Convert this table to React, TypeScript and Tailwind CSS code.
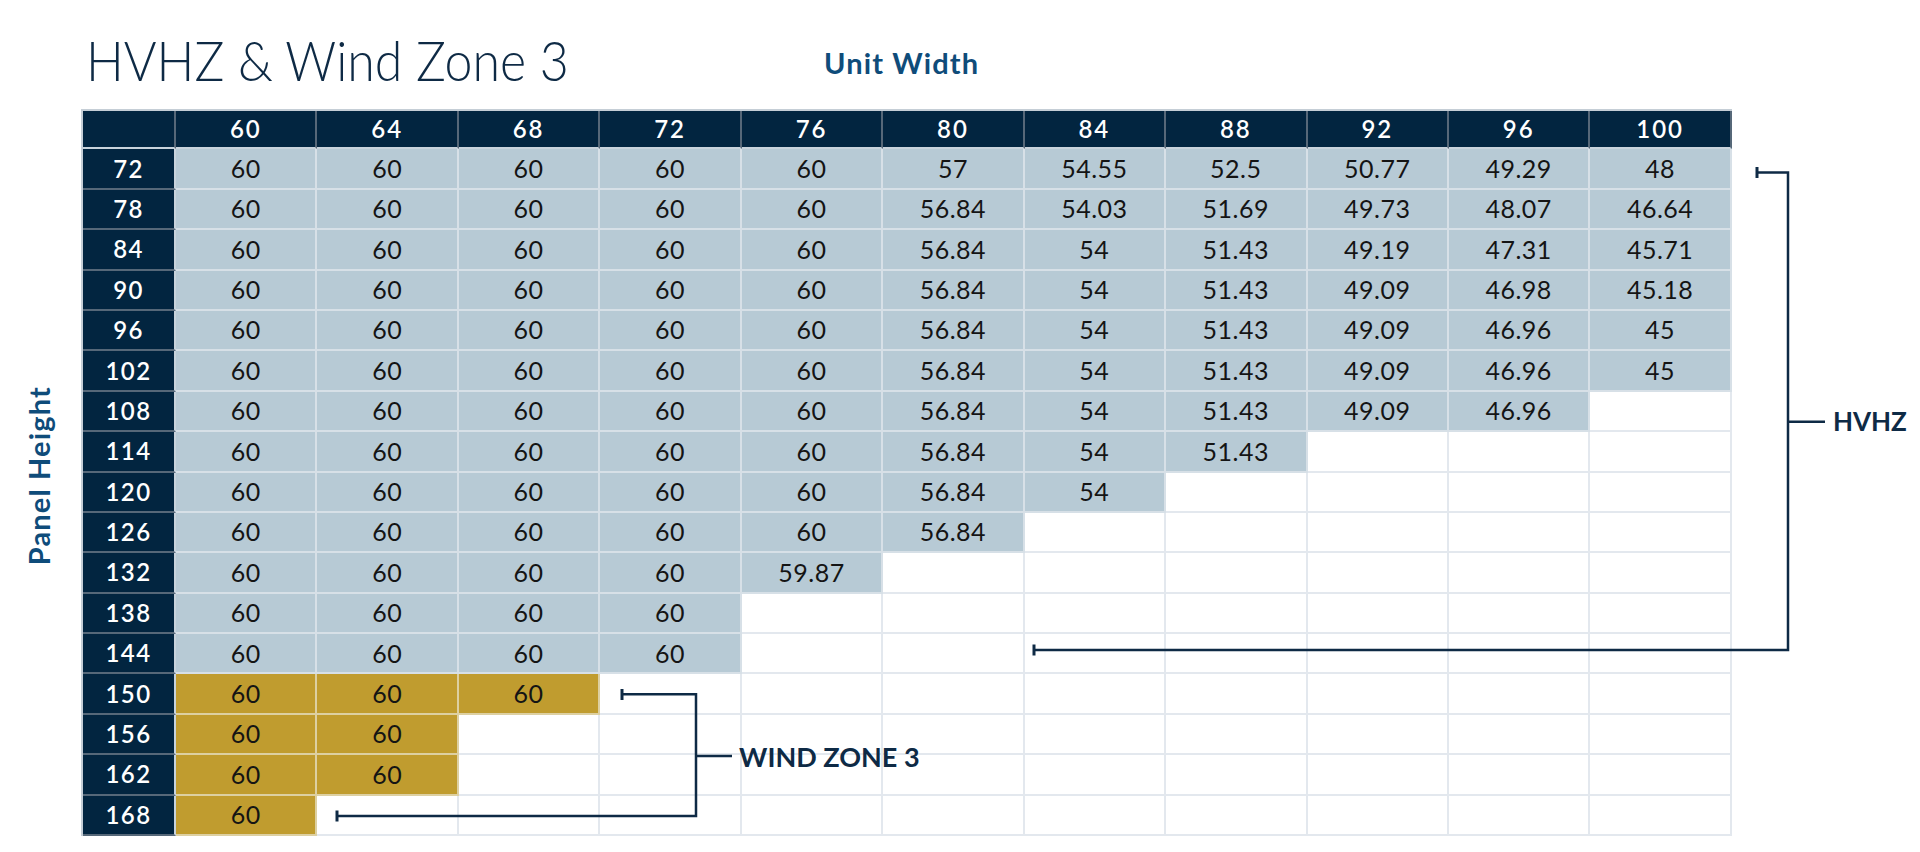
import React from "react";

const widths = [60, 64, 68, 72, 76, 80, 84, 88, 92, 96, 100];

const r60 = (n: number) => Array(n).fill("60");

const rows: { height: number; values: string[]; zone: "hvhz" | "wz" }[] = [
  { height: 72, values: [...r60(5), "57", "54.55", "52.5", "50.77", "49.29", "48"], zone: "hvhz" },
  { height: 78, values: [...r60(5), "56.84", "54.03", "51.69", "49.73", "48.07", "46.64"], zone: "hvhz" },
  { height: 84, values: [...r60(5), "56.84", "54", "51.43", "49.19", "47.31", "45.71"], zone: "hvhz" },
  { height: 90, values: [...r60(5), "56.84", "54", "51.43", "49.09", "46.98", "45.18"], zone: "hvhz" },
  { height: 96, values: [...r60(5), "56.84", "54", "51.43", "49.09", "46.96", "45"], zone: "hvhz" },
  { height: 102, values: [...r60(5), "56.84", "54", "51.43", "49.09", "46.96", "45"], zone: "hvhz" },
  { height: 108, values: [...r60(5), "56.84", "54", "51.43", "49.09", "46.96"], zone: "hvhz" },
  { height: 114, values: [...r60(5), "56.84", "54", "51.43"], zone: "hvhz" },
  { height: 120, values: [...r60(5), "56.84", "54"], zone: "hvhz" },
  { height: 126, values: [...r60(5), "56.84"], zone: "hvhz" },
  { height: 132, values: [...r60(4), "59.87"], zone: "hvhz" },
  { height: 138, values: r60(4), zone: "hvhz" },
  { height: 144, values: r60(4), zone: "hvhz" },
  { height: 150, values: r60(3), zone: "wz" },
  { height: 156, values: r60(2), zone: "wz" },
  { height: 162, values: r60(2), zone: "wz" },
  { height: 168, values: r60(1), zone: "wz" },
];

function Brackets() {
  // page y minus 109 (top of the table area)
  return (
    <svg
      className="pointer-events-none absolute left-0 top-0"
      width="1920"
      height="727"
      viewBox="0 0 1920 727"
      fill="none"
      stroke="#0e2a45"
      strokeWidth="2.5"
    >
      {/* HVHZ */}
      <path d="M1757 63.5 H1788 V541 H1034" />
      <path d="M1788 312.7 H1825" />
      <path d="M1757 58 V69" strokeWidth="3" />
      <path d="M1034 535.5 V546.5" strokeWidth="3" />
      {/* Wind Zone 3 */}
      <path d="M622 585.3 H696 V707 H337" />
      <path d="M696 647 H732" />
      <path d="M622 580 V591" strokeWidth="3" />
      <path d="M337 701.5 V712.5" strokeWidth="3" />
    </svg>
  );
}

export default function App() {
  return (
    <div className="w-[1920px] h-[852px] bg-white font-['Lato',sans-serif] overflow-hidden">
      <div className="flex h-[109px] items-start">
        <div className="w-[824px] pl-[86px] pt-[33px]">
          <h1 className="origin-left scale-x-[0.91] whitespace-nowrap text-[55px] font-light leading-none text-[#0e2a45]">
            HVHZ &amp; Wind Zone 3
          </h1>
        </div>
        <div className="pt-[48px] text-[29px] font-bold leading-none tracking-[0.04em] text-[#0f4c7a]">
          Unit Width
        </div>
      </div>

      <div className="relative flex h-[727px]">
        <div className="flex w-[81px] items-center pl-[24px] pt-[7px]">
          <span className="rotate-180 whitespace-nowrap text-[29px] font-bold leading-none tracking-[0.04em] text-[#0f4c7a] [writing-mode:vertical-rl]">
            Panel Height
          </span>
        </div>

        <div className="grid h-[727px] w-[1651px] grid-cols-[93px_repeat(11,141.45px)] grid-rows-[38.4px_repeat(17,40.4px)] border-l-2 border-t-2 border-[#c5ced6]">
          <div className="border-b-2 border-r-2 border-b-[#c8d3dc] border-r-[#566879] bg-[#022540]" />
          {widths.map((w) => (
            <div
              key={w}
              className="flex items-center justify-center border-b-2 border-r-2 border-b-[#c8d3dc] border-r-[#566879] bg-[#022540] text-[24px] font-semibold tracking-[0.08em] text-white"
            >
              {w}
            </div>
          ))}

          {rows.map((row) => (
            <React.Fragment key={row.height}>
              <div className="flex items-center justify-center border-b-2 border-r-2 border-b-[#566879] border-r-[#c8d3dc] bg-[#022540] text-[24px] font-semibold tracking-[0.06em] text-white">
                {row.height}
              </div>
              {widths.map((w, i) => {
                const v = row.values[i];
                if (v === undefined) {
                  return <div key={w} className="border-b-2 border-r-2 border-[#e3e8ee] bg-white" />;
                }
                return (
                  <div
                    key={w}
                    className={
                      row.zone === "wz"
                        ? "flex items-center justify-center border-b-2 border-r-2 border-[#ddd0a2] bg-[#c09c2f] text-[25px] tracking-[0.02em] text-[#141414]"
                        : "flex items-center justify-center border-b-2 border-r-2 border-[#d7e0e7] bg-[#b7cad5] text-[25px] tracking-[0.02em] text-[#141414]"
                    }
                  >
                    {v}
                  </div>
                );
              })}
            </React.Fragment>
          ))}
        </div>

        <Brackets />

        <div className="absolute left-[1833px] top-[299px] text-[26px] font-bold leading-none text-[#0e2a45]">
          HVHZ
        </div>
        <div className="absolute left-[739px] top-[634px] whitespace-nowrap text-[27px] font-bold leading-none text-[#0e2a45]">
          WIND ZONE 3
        </div>
      </div>
    </div>
  );
}
